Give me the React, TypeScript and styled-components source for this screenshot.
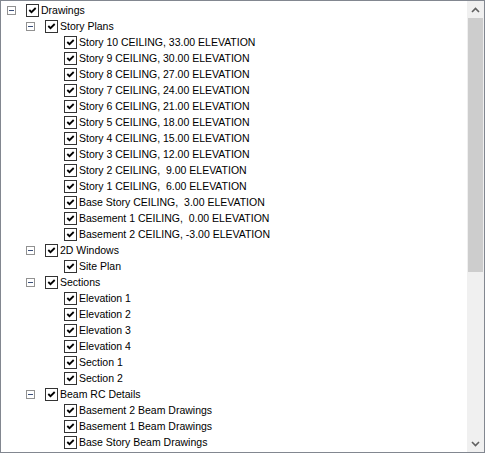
import React from 'react';
import styled, { createGlobalStyle } from 'styled-components';

type Node = {
  label: string;
  children?: Node[];
};

const stories: Node[] = [
  'Story 10 CEILING, 33.00 ELEVATION',
  'Story 9 CEILING, 30.00 ELEVATION',
  'Story 8 CEILING, 27.00 ELEVATION',
  'Story 7 CEILING, 24.00 ELEVATION',
  'Story 6 CEILING, 21.00 ELEVATION',
  'Story 5 CEILING, 18.00 ELEVATION',
  'Story 4 CEILING, 15.00 ELEVATION',
  'Story 3 CEILING, 12.00 ELEVATION',
  'Story 2 CEILING,  9.00 ELEVATION',
  'Story 1 CEILING,  6.00 ELEVATION',
  'Base Story CEILING,  3.00 ELEVATION',
  'Basement 1 CEILING,  0.00 ELEVATION',
  'Basement 2 CEILING, -3.00 ELEVATION',
].map((label) => ({ label }));

const tree: Node[] = [
  {
    label: 'Drawings',
    children: [
      { label: 'Story Plans', children: stories },
      { label: '2D Windows', children: [{ label: 'Site Plan' }] },
      {
        label: 'Sections',
        children: [
          { label: 'Elevation 1' },
          { label: 'Elevation 2' },
          { label: 'Elevation 3' },
          { label: 'Elevation 4' },
          { label: 'Section 1' },
          { label: 'Section 2' },
        ],
      },
      {
        label: 'Beam RC Details',
        children: [
          { label: 'Basement 2 Beam Drawings' },
          { label: 'Basement 1 Beam Drawings' },
          { label: 'Base Story Beam Drawings' },
        ],
      },
    ],
  },
];

const TreeRows: React.FC<{ nodes: Node[]; level: number }> = ({ nodes, level }) => (
  <>
    {nodes.map((node) => (
      <React.Fragment key={node.label}>
        <Row $level={level}>
          <ExpanderSlot>{node.children && <Expander />}</ExpanderSlot>
          <CheckBox>
            <svg width="11" height="11" viewBox="0 0 11 11">
              <path d="M2.3 5 L4.5 7.2 L8.7 3" fill="none" stroke="#000" strokeWidth="1.8" />
            </svg>
          </CheckBox>
          <Label>{node.label}</Label>
        </Row>
        {node.children && <TreeRows nodes={node.children} level={level + 1} />}
      </React.Fragment>
    ))}
  </>
);

const App: React.FC = () => (
  <>
    <GlobalStyle />
    <Frame>
      <Tree>
        <TreeRows nodes={tree} level={0} />
      </Tree>
      <ScrollBar>
        <ArrowButton>
          <svg width="9" height="6" viewBox="0 0 9 6">
            <path d="M1 5 L4.5 1.5 L8 5" fill="none" stroke="#606060" strokeWidth="1.6" />
          </svg>
        </ArrowButton>
        <Track>
          <Thumb />
        </Track>
        <ArrowButton>
          <svg width="9" height="6" viewBox="0 0 9 6">
            <path d="M1 1 L4.5 4.5 L8 1" fill="none" stroke="#606060" strokeWidth="1.6" />
          </svg>
        </ArrowButton>
      </ScrollBar>
    </Frame>
  </>
);

export default App;

/* ── Styles ───────────────────────────────────────── */

const GlobalStyle = createGlobalStyle`
  html, body {
    margin: 0;
    padding: 0;
    background: #fff;
  }
`;

const Frame = styled.div`
  box-sizing: border-box;
  width: 485px;
  height: 453px;
  border: 1px solid #828790;
  display: flex;
  background: #fff;
  overflow: hidden;
`;

const Tree = styled.div`
  flex: 1;
  padding-top: 1px;
  overflow: hidden;
  font-family: 'Liberation Sans', Arial, sans-serif;
  font-size: 10.5px;
  color: #000;
`;

const Row = styled.div<{ $level: number }>`
  display: flex;
  align-items: center;
  height: 16px;
  padding-left: ${({ $level }) => $level * 19}px;
  white-space: pre;
`;

const ExpanderSlot = styled.div`
  width: 25px;
  height: 16px;
  display: flex;
  align-items: center;
  padding-left: 6px;
  box-sizing: border-box;
  flex-shrink: 0;
`;

const Expander = styled.div`
  position: relative;
  box-sizing: border-box;
  width: 9px;
  height: 9px;
  border: 1px solid #919191;
  background: #fff;

  &::after {
    content: '';
    position: absolute;
    left: 1px;
    top: 3px;
    width: 5px;
    height: 1px;
    background: #3b4f7a;
  }
`;

const CheckBox = styled.div`
  box-sizing: border-box;
  width: 13px;
  height: 13px;
  border: 1px solid #333;
  background: #fff;
  display: flex;
  align-items: center;
  justify-content: center;
  flex-shrink: 0;
`;

const Label = styled.span`
  margin-left: 2px;
  line-height: 16px;
`;

const ScrollBar = styled.div`
  width: 17px;
  display: flex;
  flex-direction: column;
  background: #f0f0f0;
  flex-shrink: 0;
`;

const ArrowButton = styled.div`
  height: 17px;
  display: flex;
  align-items: center;
  justify-content: center;
`;

const Track = styled.div`
  flex: 1;
  padding: 0 1px;
`;

const Thumb = styled.div`
  height: 254px;
  background: #cdcdcd;
`;
